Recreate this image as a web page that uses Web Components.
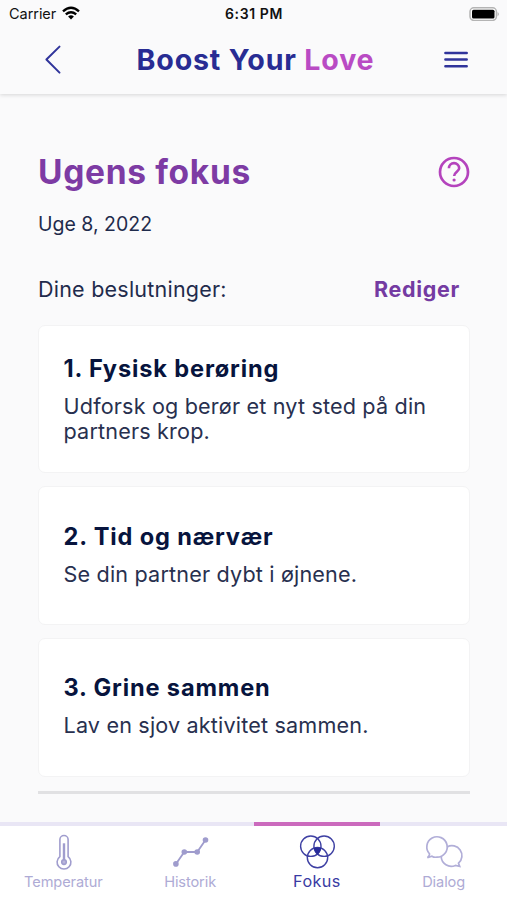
<!DOCTYPE html>
<html lang="da">
<head>
<meta charset="utf-8">
<title>Boost Your Love</title>
<style>
html,body{margin:0;height:100%}
body{background:#fafafb;font-family:Inter,"Liberation Sans",sans-serif;color:#1f2b4c;overflow:hidden}
</style>
</head>
<body>
<app-screen></app-screen>
<script>
const define = (name, html) => customElements.define(name, class extends HTMLElement {
  constructor() {
    super();
    const t = document.createElement('template');
    t.innerHTML = html;
    this.attachShadow({mode: 'open'}).append(t.content.cloneNode(true));
  }
});

define('status-bar', `
<style>
:host{display:grid;grid-template-columns:1fr auto 1fr;align-items:center;height:28px;padding:0 7px 0 9px;color:#111;font-size:14.5px;line-height:28px}
.left{display:flex;align-items:center;gap:6px}
.carrier{letter-spacing:-.05px}
.time{font-weight:600;font-size:14px;letter-spacing:.6px;margin-right:1px}
.battery{justify-self:end;margin-top:-1px}
svg{display:block}
.wifi{margin-top:-3px}
</style>
<div class="left"><span class="carrier">Carrier</span>
<svg class="wifi" width="18" height="14" viewBox="0 0 18 14" fill="none" stroke="#000" stroke-width="2.4"><path d="M1 5.3Q9-1.8 17 5.3M3.8 8.3Q9 4 14.2 8.3"/><path d="M9 13.4 6.1 10.4Q9 8.2 11.9 10.4Z" fill="#000" stroke="none"/></svg></div>
<span class="time">6:31 PM</span>
<svg class="battery" width="31" height="14" viewBox="0 0 31 14"><rect x="1" y=".8" width="26.4" height="12.6" rx="3.8" fill="#fff" stroke="#b4b4b4" stroke-width="1.5"/><rect x="3" y="2.7" width="22.5" height="8.8" rx="1.5"/><path d="M28.6 4.9Q31 7 28.6 9.2Z" fill="#aaa"/></svg>`);

define('nav-header', `
<style>
:host{display:grid;grid-template-columns:60px 1fr 60px;align-items:center;height:66px;padding:0 22px;box-sizing:border-box;box-shadow:0 1px 4px rgba(0,0,0,.15);clip-path:inset(0 0 -8px 0);background:#fafafb}
h1{margin:0;text-align:center;font-size:28.6px;line-height:34px;font-weight:700;color:#282c93;letter-spacing:.82px;white-space:nowrap;padding:0 0 3px 4px}
svg{display:block}
.back{margin:-2px 0 0 22px}
.menu{justify-self:end;margin:-2px 17px 0 0}
</style>
<svg class="back" width="18" height="30" viewBox="0 0 18 30" fill="none" stroke="#30349b" stroke-width="2" stroke-linecap="round" stroke-linejoin="round"><path d="M15.5 1.6 2.4 14.5 15.5 27.6"/></svg>
<h1><slot></slot></h1>
<svg class="menu" width="24" height="20" viewBox="0 0 24 20" stroke="#30349b" stroke-width="2.5" stroke-linecap="round"><path d="M1.4 3H22.7M1.4 9.6H22.7M1.4 16.3H22.7"/></svg>`);

define('week-heading', `
<style>
:host{display:block}
.row{display:flex;justify-content:space-between;align-items:center}
h2{margin:0;font-size:33.5px;line-height:42px;font-weight:700;color:#7d3ba4;letter-spacing:.68px}
.date{margin-top:19px;font-size:19.5px;line-height:24px;letter-spacing:0}
svg{display:block}
</style>
<div class="row"><h2><slot name="title"></slot></h2>
<svg width="32" height="32" viewBox="0 0 32 32" fill="none" stroke="#b443bd" stroke-width="2.7"><circle cx="16" cy="16" r="14"/><path d="M10.9 12.3A5.15 5.15 0 0 1 21.2 12.2C21.2 15.5 16.1 16 16.1 20" stroke-width="2.6"/><circle cx="16.1" cy="24" r="1.6" fill="#b443bd" stroke="none"/></svg></div>
<div class="date"><slot name="date"></slot></div>`);

define('section-bar', `
<style>
:host{display:flex;justify-content:space-between;align-items:center;font-size:21.5px;line-height:28px;padding-right:10px}
.label{letter-spacing:.23px}
.action{font-weight:700;color:#743ba2;letter-spacing:.68px}
</style>
<span class="label"><slot></slot></span><span class="action"><slot name="action"></slot></span>`);

define('focus-card', `
<style>
:host{display:flex;flex-direction:column;box-sizing:border-box;background:#fff;border:1px solid #f3f3f4;border-radius:7px;padding:29px 24px 0 24.5px;height:var(--h,139px)}
h3{margin:0;font-size:23.6px;line-height:28px;font-weight:700;color:#07143d;letter-spacing:.85px}
p{margin:11px 0 0;font-size:21.6px;line-height:24.5px;letter-spacing:.17px;color:#28304f}
</style>
<h3><slot name="title"></slot></h3><p><slot></slot></p>`);

define('tab-item', `
<style>
:host{display:flex;flex-direction:column;align-items:center;flex:1;border-top:4.5px solid #e9e6f5;box-sizing:border-box;color:#aeabd5}
:host([active]){border-color:#cb6abd;color:#393ba3}
.icon{height:44px;margin-top:4px;width:48px}
.label{font-size:14.6px;line-height:18px;letter-spacing:-.1px;margin-top:-1px}
:host([active]) .label{font-size:16.2px;letter-spacing:.4px;margin-top:-2.5px}
</style>
<div class="icon"><slot name="icon"></slot></div><span class="label"><slot></slot></span>`);

define('tab-bar', `<style>:host{display:flex;height:78px;background:#fff}</style><slot></slot>`);

define('app-screen', `
<style>
:host{display:flex;flex-direction:column;height:900px;width:507px}
main{flex:1;display:flex;flex-direction:column;padding:57px 37px 0 38px}
em{font-style:normal;color:#b94bc4}
section-bar{margin:39px 0 22px}
.cards{display:flex;flex-direction:column;gap:13px}
hr{border:0;height:3px;background:#e1e1e3;margin:14px 0 0;width:100%}
svg{display:block}
</style>
<status-bar></status-bar>
<nav-header>Boost Your <em>Love</em></nav-header>
<main>
<week-heading><span slot="title">Ugens fokus</span><span slot="date">Uge 8, 2022</span></week-heading>
<section-bar>Dine beslutninger:<span slot="action">Rediger</span></section-bar>
<div class="cards">
<focus-card style="--h:148px"><span slot="title">1. Fysisk berøring</span>Udforsk og berør et nyt sted på din partners krop.</focus-card>
<focus-card style="padding-top:36px"><span slot="title">2. Tid og nærvær</span>Se din partner dybt i øjnene.</focus-card>
<focus-card style="padding-top:35px"><span slot="title">3. Grine sammen</span>Lav en sjov aktivitet sammen.</focus-card>
</div>
<hr>
</main>
<tab-bar>
<tab-item><svg slot="icon" width="48" height="44" viewBox="-.7 -.3 48 44" fill="none" stroke="#a09dce" stroke-width="1.6"><path d="M20.2 26.3V9.3a4.1 4.1 0 0 1 8.2 0V26.3a6.9 6.9 0 1 1-8.2 0Z"/><path d="M24.3 13V31" stroke-width="2.4"/><circle cx="24.3" cy="31.8" r="2.3" fill="#b9b6dc"/></svg>Temperatur</tab-item>
<tab-item><svg slot="icon" width="48" height="44" viewBox="0 0 48 44" fill="#9f9ccd" stroke="#9f9ccd" stroke-width="1.8"><path d="M9.9 33.9 18.3 22H31.2L39.5 10" fill="none"/><g stroke="none"><circle cx="9.9" cy="33.9" r="2.8"/><circle cx="18.3" cy="22" r="2.8"/><circle cx="31.2" cy="22" r="2.8"/><circle cx="39.5" cy="10" r="2.8"/></g></svg>Historik</tab-item>
<tab-item active><svg slot="icon" width="48" height="44" viewBox="0 0 48 44" fill="none" stroke="#3e40a3" stroke-width="1.4"><circle cx="17.8" cy="16.2" r="10.2"/><circle cx="31.1" cy="16.2" r="10.2"/><circle cx="24.5" cy="27.6" r="10.2"/><path d="M20.7 18.2Q24.5 16.8 28.3 18.2 27.3 22 24.5 24.8 21.7 22 20.7 18.2Z" fill="#282b9a" stroke="none"/></svg>Fokus</tab-item>
<tab-item><svg slot="icon" width="48" height="44" viewBox="0 0 48 44" fill="none" stroke="#b1aed8" stroke-width="1.7"><path d="M9.6 24A10.2 10.2 0 1 1 17 27.2Q13.8 27.5 11.9 26.2L7.4 27.6Q9.4 26 9.6 24Z"/><path d="M27.1 16.9A10 10 0 0 1 38.5 33.2L39.7 36.4 35.4 35.4A10 10 0 0 1 21.2 26.6"/></svg>Dialog</tab-item>
</tab-bar>`);
</script>
</body>
</html>
